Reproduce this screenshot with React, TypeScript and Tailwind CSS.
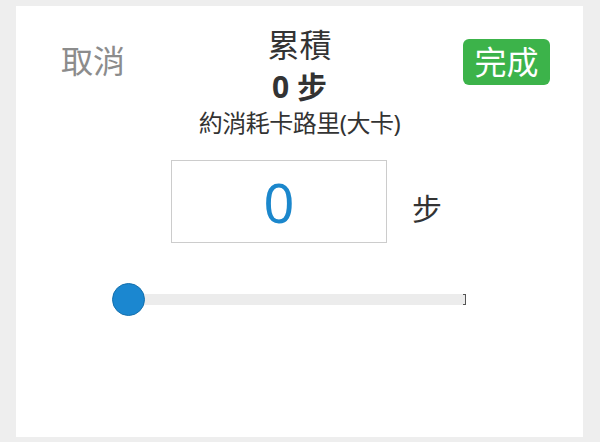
export default function App() {
  return (
    <div
      className="w-[600px] h-[442px] bg-[#eeeeee] pt-[6px] pl-[16px]"
      style={{ fontFamily: '"Noto Sans", "Noto Sans CJK TC", sans-serif' }}
    >
      <div className="w-[567px] h-[431px] bg-white flex flex-col">
        {/* header */}
        <div className="grid grid-cols-[1fr_auto_1fr] pt-[21px]">
          <div className="pl-[45px] pt-[14px]">
            <span className="text-[32px] leading-[40px] text-[#8c8c8c]">取消</span>
          </div>
          <div className="flex flex-col items-center">
            <div className="text-[32px] leading-[36px] text-[#333333]">累積</div>
            <div className="text-[30px] leading-[40px] font-bold text-[#333333] mt-[4px]">0 步</div>
            <div className="text-[24px] leading-[30px] text-[#333333] mt-[1px] tracking-[-0.5px]">約消耗卡路里(大卡)</div>
          </div>
          <div className="flex justify-end pr-[33px] pt-[12px]">
            <button className="h-[46px] w-[87px] rounded-[6px] bg-[#3cb34a] text-white text-[32px] leading-[46px]">
              完成
            </button>
          </div>
        </div>

        {/* value input */}
        <div className="flex items-center ml-[155px] mt-[22px]">
          <div className="w-[216px] h-[83px] border-[1.5px] border-[#cccccc] flex items-center justify-center">
            <span className="text-[54px] leading-none text-[#1b87cc]">0</span>
          </div>
          <span className="ml-[25px] mt-[14px] text-[30px] text-[#333333]">步</span>
        </div>

        {/* slider */}
        <div className="relative ml-[96px] mt-[40px] w-[354px] h-[33px] flex items-center">
          <div className="ml-[16px] flex-1 h-[11px] bg-[#ececec] relative">
            <div className="absolute right-0 top-0 h-full w-[3px] border-r-[1.5px] border-y-[1.5px] border-[#555555]" />
          </div>
          <div className="absolute left-0 top-0 w-[33px] h-[33px] rounded-full bg-[#1b87d0] border border-[#1570ad]" />
        </div>
      </div>
    </div>
  );
}
